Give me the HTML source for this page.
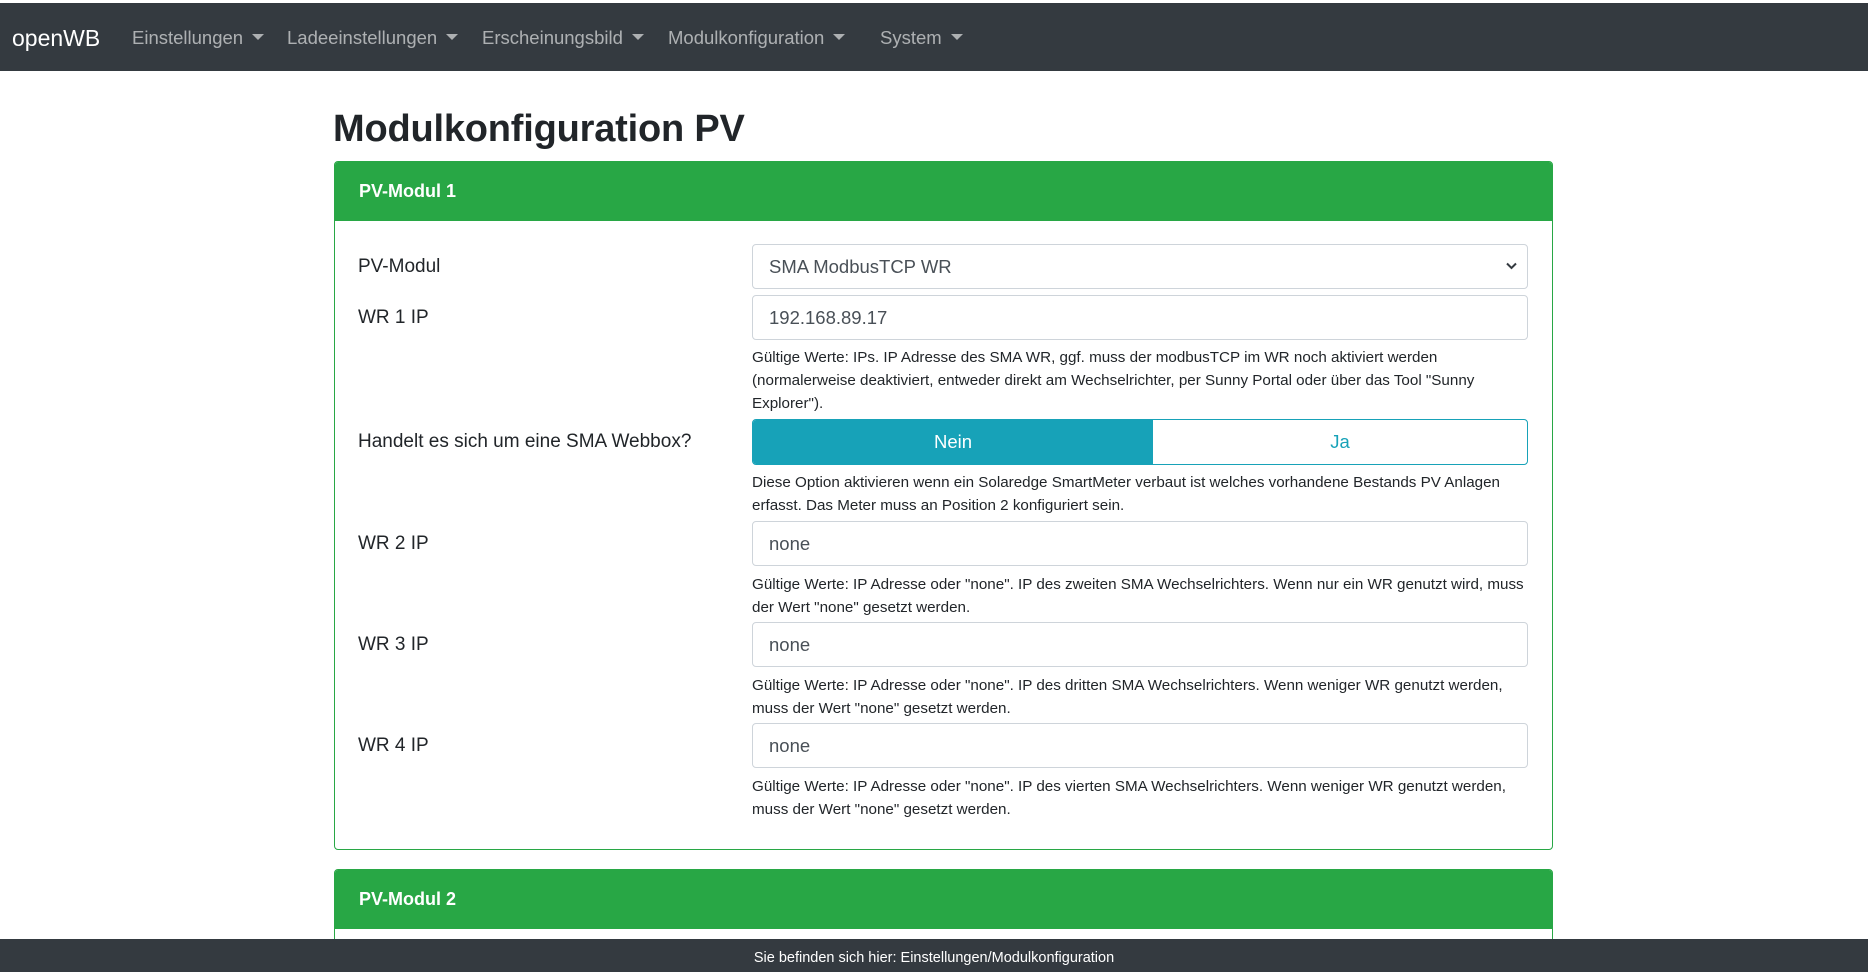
<!DOCTYPE html>
<html><head><meta charset="utf-8"><style>
*{box-sizing:border-box;margin:0;padding:0}
html,body{width:1868px;height:972px;overflow:hidden}
body{background:#fff;font-family:"Liberation Sans",sans-serif;color:#212529;position:relative}
.nav{position:absolute;left:0;top:3px;width:1868px;height:68px;background:#343a40}
.brand{position:absolute;left:12px;top:22px;font-size:23px;color:#fff}
.ni{position:absolute;top:24px;font-size:18.5px;color:rgba(255,255,255,.6)}
.ni:after{content:"";display:inline-block;margin-left:9px;vertical-align:4px;border-top:6px solid rgba(255,255,255,.6);border-left:6px solid transparent;border-right:6px solid transparent}
h1{position:absolute;left:333px;top:108px;font-size:38px;font-weight:bold;letter-spacing:-.2px}
.card{position:absolute;left:334px;width:1219px;border:1px solid #28a745;border-radius:4px;overflow:hidden}
.ch{background:#28a745;color:#fff;font-weight:bold;font-size:18px;height:59px;line-height:59px;padding-left:24px}
.lbl{position:absolute;left:358px;font-size:19px}
.inp{position:absolute;left:752px;width:776px;height:45px;border:1px solid #ced4da;border-radius:4px;font-size:18.5px;padding-left:16px;line-height:43px;color:#495057}
.help{position:absolute;left:752px;width:800px;font-size:15.2px;line-height:23px;color:#212529;white-space:nowrap}
.foot{position:absolute;z-index:5;left:0;top:939px;width:1868px;height:33px;background:#343a40;color:#fff;font-size:14.5px;text-align:center;line-height:38px}
</style></head><body>
<div class="nav">
<div class="brand">openWB</div>
<div class="ni" style="left:132px">Einstellungen</div>
<div class="ni" style="left:287px">Ladeeinstellungen</div>
<div class="ni" style="left:482px">Erscheinungsbild</div>
<div class="ni" style="left:668px">Modulkonfiguration</div>
<div class="ni" style="left:880px">System</div>
</div>
<h1>Modulkonfiguration PV</h1>
<div class="card" style="top:161px;height:689px"><div class="ch">PV-Modul 1</div></div>
<div class="card" style="top:869px;height:100px"><div class="ch">PV-Modul 2</div></div>

<div class="lbl" style="top:256px">PV-Modul</div>
<div class="inp" style="top:244px;color:#495057">SMA ModbusTCP WR<svg style="position:absolute;right:10px;top:17px" width="11" height="8" viewBox="0 0 11 8"><path d="M1 1.5L5.5 6 10 1.5" fill="none" stroke="#343a40" stroke-width="2"/></svg></div>

<div class="lbl" style="top:307px">WR 1 IP</div>
<div class="inp" style="top:295px">192.168.89.17</div>
<div class="help" style="top:346px">Gültige Werte: IPs. IP Adresse des SMA WR, ggf. muss der modbusTCP im WR noch aktiviert werden<br>(normalerweise deaktiviert, entweder direkt am Wechselrichter, per Sunny Portal oder über das Tool "Sunny<br>Explorer").</div>

<div class="lbl" style="top:431px">Handelt es sich um eine SMA Webbox?</div>
<div style="position:absolute;left:752px;top:419px;width:776px;height:46px;border:1px solid #17a2b8;border-radius:4px;overflow:hidden;font-size:18.5px">
<div style="position:absolute;left:0;top:0;width:400px;height:100%;background:#17a2b8;color:#fff;text-align:center;line-height:44px">Nein</div>
<div style="position:absolute;left:400px;top:0;right:0;height:100%;color:#17a2b8;text-align:center;line-height:44px">Ja</div>
</div>
<div class="help" style="top:471px">Diese Option aktivieren wenn ein Solaredge SmartMeter verbaut ist welches vorhandene Bestands PV Anlagen<br>erfasst. Das Meter muss an Position 2 konfiguriert sein.</div>

<div class="lbl" style="top:533px">WR 2 IP</div>
<div class="inp" style="top:521px">none</div>
<div class="help" style="top:573px">Gültige Werte: IP Adresse oder "none". IP des zweiten SMA Wechselrichters. Wenn nur ein WR genutzt wird, muss<br>der Wert "none" gesetzt werden.</div>

<div class="lbl" style="top:634px">WR 3 IP</div>
<div class="inp" style="top:622px">none</div>
<div class="help" style="top:674px">Gültige Werte: IP Adresse oder "none". IP des dritten SMA Wechselrichters. Wenn weniger WR genutzt werden,<br>muss der Wert "none" gesetzt werden.</div>

<div class="lbl" style="top:735px">WR 4 IP</div>
<div class="inp" style="top:723px">none</div>
<div class="help" style="top:775px">Gültige Werte: IP Adresse oder "none". IP des vierten SMA Wechselrichters. Wenn weniger WR genutzt werden,<br>muss der Wert "none" gesetzt werden.</div>

<div class="foot">Sie befinden sich hier: Einstellungen/Modulkonfiguration</div>
</body></html>
